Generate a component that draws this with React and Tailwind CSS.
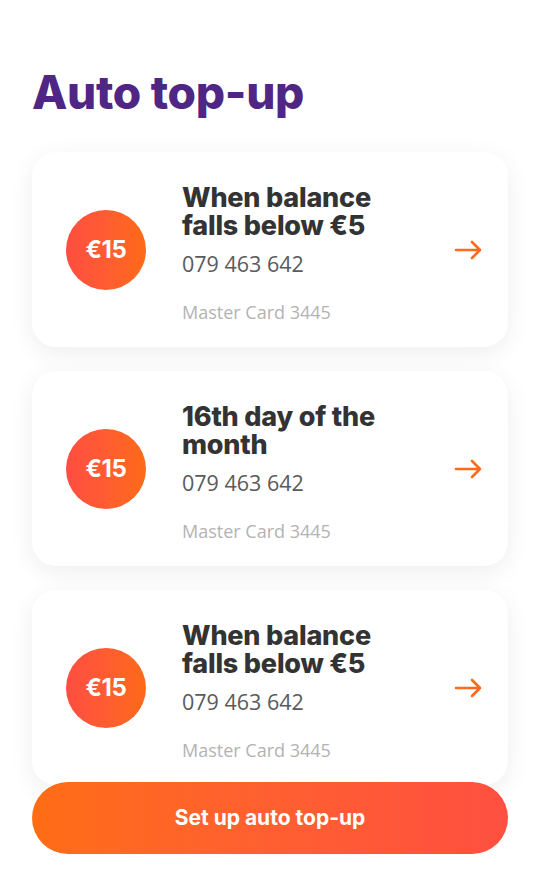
function ArrowRight() {
  return (
    <svg className="w-7 h-7" fill="none" viewBox="0 0 28 28" stroke="#ff6a1a" strokeWidth={2.6}>
      <path strokeLinecap="round" strokeLinejoin="round" d="M2 14h24M18 6l8 8-8 8" />
    </svg>
  );
}

const rules = [
  { title: 'When balance falls below €5', phone: '079 463 642', card: 'Master Card 3445' },
  { title: '16th day of the month', phone: '079 463 642', card: 'Master Card 3445' },
  { title: 'When balance falls below €5', phone: '079 463 642', card: 'Master Card 3445' },
];

export default function App() {
  return (
    <div className="w-[540px] h-[884px] bg-white overflow-hidden font-['Inter',sans-serif] flex flex-col px-8">
      <h1 className="mt-[62px] text-[46px] leading-[60px] font-extrabold tracking-[-0.3px] text-[#4f2683]">
        Auto top-up
      </h1>

      <div className="mt-[30px] flex flex-col gap-6">
        {rules.map((r, i) => (
          <div
            key={i}
            className="h-[195px] bg-white rounded-[24px] shadow-[0_6px_24px_rgba(0,0,0,0.07)] flex items-center pl-[34px] pr-[26px]"
          >
            <div className="w-[80px] h-[80px] rounded-full bg-gradient-to-r from-[#ff4d40] to-[#ff6a16] flex items-center justify-center flex-shrink-0">
              <span className="text-white text-[24px] font-bold tracking-[-0.3px]">€15</span>
            </div>
            <div className="ml-[36px] flex-1 flex flex-col pt-[8px]">
              <p className="text-[27px] leading-[28px] font-extrabold text-[#333333] tracking-[-0.2px] w-[220px]">
                {r.title}
              </p>
              <p className="mt-[11px] text-[21.5px] leading-[26px] text-[#5a5a5a] font-['Open_Sans',sans-serif]">
                {r.phone}
              </p>
              <p className="mt-[24px] text-[18px] leading-[22px] text-[#b3b3b3] font-['Open_Sans',sans-serif]">
                {r.card}
              </p>
            </div>
            <ArrowRight />
          </div>
        ))}
      </div>

      <button className="relative -mt-[3px] h-[72px] w-full rounded-full bg-gradient-to-r from-[#ff6d14] to-[#ff4f40] text-white text-[21px] font-bold flex items-center justify-center">
        Set up auto top-up
      </button>
    </div>
  );
}
